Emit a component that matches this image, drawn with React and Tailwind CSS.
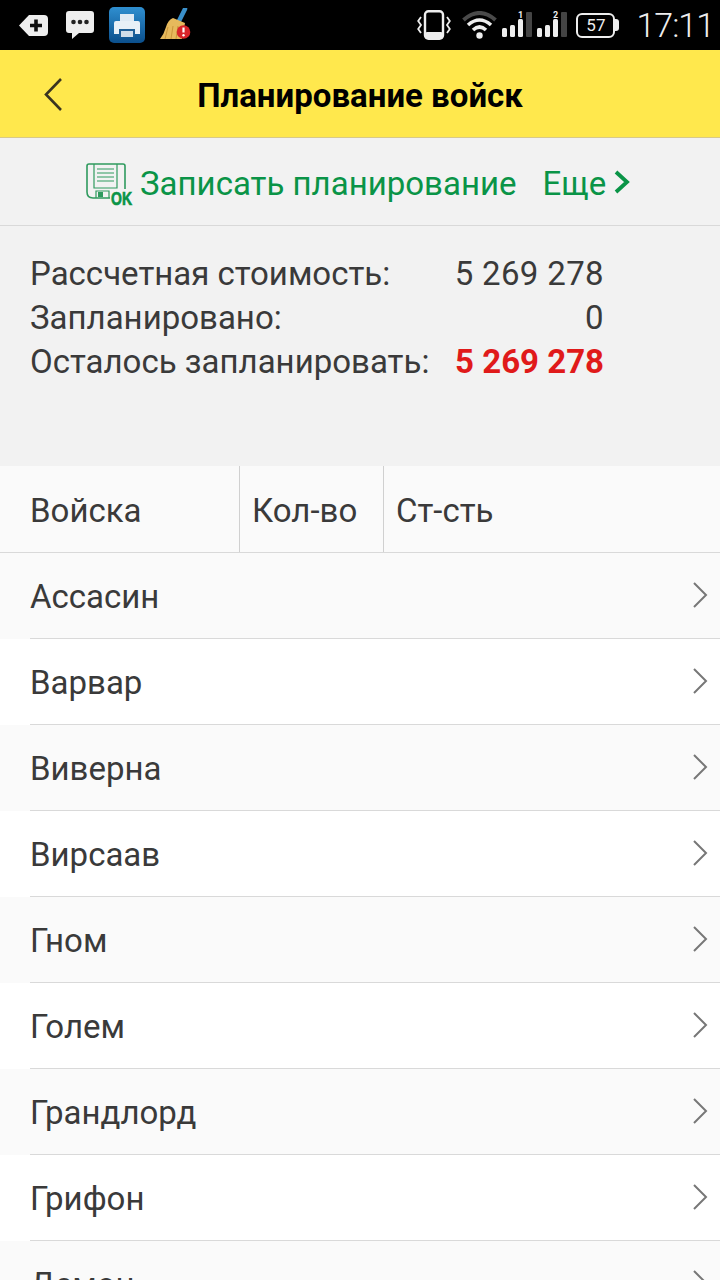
import React from 'react';

const troops = ['Ассасин', 'Варвар', 'Виверна', 'Вирсаав', 'Гном', 'Голем', 'Грандлорд', 'Грифон', 'Демон'];

function StatusIcons() {
    return (
        <div className="flex items-center">
            <svg width="30" height="24" viewBox="0 0 30 24" className="ml-[19px]">
                <path d="M10 2 L25 2 Q29 2 29 6 L29 19 Q29 23 25 23 L10 23 L0 12.5 Z" fill="#eeeeee" />
                <path d="M11 12.5h12M17 6.5v12" stroke="#111" strokeWidth="3.6" />
            </svg>
            <svg width="30" height="30" viewBox="0 0 30 30" className="ml-[16px]">
                <path d="M1 4 Q1 1 4 1 L26 1 Q29 1 29 4 L29 20 Q29 23 26 23 L14 23 L7 29 L7 23 L4 23 Q1 23 1 20 Z" fill="#eeeeee" />
                <circle cx="8.5" cy="12" r="2.3" fill="#222" />
                <circle cx="15" cy="12" r="2.3" fill="#222" />
                <circle cx="21.5" cy="12" r="2.3" fill="#222" />
            </svg>
            <svg width="36" height="36" viewBox="0 0 36 36" className="ml-[14px]">
                <defs>
                    <linearGradient id="printerBg" x1="0" y1="0" x2="0" y2="1">
                        <stop offset="0" stopColor="#2f8fd0" />
                        <stop offset="1" stopColor="#0b4f8c" />
                    </linearGradient>
                </defs>
                <rect x="0" y="0" width="36" height="36" rx="5" fill="url(#printerBg)" />
                <path d="M11 7h14v7H11z" fill="#dfeaf4" />
                <path d="M7 14h22q2 0 2 2v11h-5v-5H10v5H5V16q0-2 2-2z" fill="#e8f0f7" />
                <path d="M10 22h16v8H10z" fill="#1f5f96" />
                <path d="M12 24h12v6H12z" fill="#cfdde9" />
            </svg>
            <svg width="34" height="34" viewBox="0 0 34 34" className="ml-[15px]">
                <path d="M25 1 L19 13" stroke="#3a8fc9" strokeWidth="4.5" strokeLinecap="round" />
                <path d="M13 10 L25 15 L22 31 L0 31 Q4 26 6 19 Q8 12 13 10 Z" fill="#e6b95c" />
                <path d="M8 19 L5 31M13 18 L11 31M18 18 L16 31" stroke="#c9953a" strokeWidth="1" />
                <circle cx="23.5" cy="24" r="6.8" fill="#d8252a" />
                <path d="M23.5 19.5v5" stroke="#fff" strokeWidth="2.2" />
                <circle cx="23.5" cy="27.3" r="1.2" fill="#fff" />
            </svg>
        </div>
    );
}

function SignalBars({ label }) {
    return (
        <svg width="30" height="28" viewBox="0 0 30 28">
            <rect x="0" y="17" width="5" height="9" rx="1.5" fill="#eeeeee" />
            <rect x="8" y="14" width="5" height="12" rx="1.5" fill="#eeeeee" />
            <rect x="16" y="8" width="5" height="18" rx="1.5" fill="#eeeeee" />
            <rect x="24" y="1" width="6" height="25" rx="1" fill="#444444" />
            <text x="16" y="7" fontSize="9" fontWeight="700" fill="#eeeeee" fontFamily="Roboto, sans-serif">{label}</text>
        </svg>
    );
}

function StatusRight() {
    return (
        <div className="flex items-center">
            <svg width="34" height="30" viewBox="0 0 34 30">
                <rect x="8" y="1.2" width="18" height="27.6" rx="3.5" fill="none" stroke="#eeeeee" strokeWidth="2.4" />
                <rect x="8" y="22" width="18" height="7" rx="2" fill="#eeeeee" />
                <path d="M4 7 L1.2 11 L4 15 L1.2 19 L4 23M30 7 L32.8 11 L30 15 L32.8 19 L30 23" fill="none" stroke="#eeeeee" strokeWidth="1.8" />
            </svg>
            <svg width="35" height="28" viewBox="0 0 35 28" className="ml-[11px]">
                <path d="M1.5 9 Q17.5 -5 33.5 9" fill="none" stroke="#4a4a4a" strokeWidth="4" />
                <path d="M6 14 Q17.5 4 29 14" fill="none" stroke="#eeeeee" strokeWidth="3.6" />
                <path d="M11 19 Q17.5 13 24 19" fill="none" stroke="#eeeeee" strokeWidth="3.6" />
                <circle cx="17.5" cy="24.5" r="3.2" fill="#eeeeee" />
            </svg>
            <div className="ml-[5px]"><SignalBars label="1" /></div>
            <div className="ml-[5px]"><SignalBars label="2" /></div>
            <div className="ml-[9px] flex items-center">
                <div className="w-[39px] h-[25px] rounded-[6px] border-[2.5px] border-[#eeeeee] flex items-center justify-center text-[#eeeeee] text-[17px] leading-none">57</div>
                <div className="w-[4px] h-[12px] rounded-r-[3px] bg-[#eeeeee]"></div>
            </div>
            <span className="ml-[17px] mr-[6px] text-[#eeeeee] text-[34px] leading-none font-light tracking-[-1px]">17:11</span>
        </div>
    );
}

function SaveIcon() {
    return (
        <svg width="48" height="44" viewBox="0 0 48 44" className="shrink-0 mt-[2px]">
            {/* disk outline, bottom right is cut away for the OK mark */}
            <path d="M24 35 L7 35 Q1 35 1 29 L1 3 Q1 1 3 1 L37 1 Q39 1 39 3 L39 26" fill="none" stroke="#2f9a5e" strokeWidth="1.6" />
            <path d="M8 1 V25 H31 V1 M11 6 H28 M11 10 H28 M11 14 H28 M11 18 H28" fill="none" stroke="#2f9a5e" strokeWidth="1.2" />
            <path d="M10 35 V28 H23 V35" fill="none" stroke="#2f9a5e" strokeWidth="1.2" />
            <rect x="12" y="29" width="5" height="5" fill="#2f9a5e" />
            <text x="25" y="42" fontSize="19" fontWeight="700" fill="#0a9447" stroke="#0a9447" strokeWidth="0.7" fontFamily="'Liberation Sans', sans-serif" textLength="21" lengthAdjust="spacingAndGlyphs">OK</text>
        </svg>
    );
}

function SummaryRow({ label, value, red }) {
    return (
        <div className="flex h-[44px] items-center">
            <span className="w-[420px] shrink-0 whitespace-nowrap">{label}</span>
            <span className={`w-[154px] text-right whitespace-nowrap ${red ? 'font-bold text-[#e01a1a]' : 'tracking-[0.35px]'}`}>{value}</span>
        </div>
    );
}

export default function App() {
    return (
        <div className="w-[720px] h-[1280px] overflow-hidden bg-white text-[#3a3a3a] text-[33px] font-['Roboto',sans-serif]">
            <div className="h-[50px] bg-black flex items-center justify-between">
                <StatusIcons />
                <StatusRight />
            </div>

            <div className="relative h-[88px] pt-[4px] bg-[#ffe84d] border-b border-[#d8c98a] flex items-center justify-center">
                <svg width="24" height="36" viewBox="0 0 24 36" className="absolute left-[41px] top-[27px]">
                    <path d="M20 2 L5 17.5 L20 33" fill="none" stroke="#3a3420" strokeWidth="2.6" />
                </svg>
                <span className="text-black text-[33px] font-bold">Планирование войск</span>
            </div>

            <div className="h-[88px] pt-[4px] bg-[#f2f2f2] border-b border-[#d9d9d9] flex items-center pl-[86px] text-[#0a9447]">
                <SaveIcon />
                <span className="ml-[6px]">Записать планирование</span>
                <span className="ml-[26px]">Еще</span>
                <svg width="18" height="26" viewBox="0 0 18 26" className="ml-[7px] mb-[4px]">
                    <path d="M3 3 L14 13 L3 23" fill="none" stroke="#0a9447" strokeWidth="3.8" />
                </svg>
            </div>

            <div className="h-[240px] bg-[#f2f2f2] pl-[30px] pt-[26px]">
                <SummaryRow label="Рассчетная стоимость:" value="5 269 278" />
                <SummaryRow label="Запланировано:" value="0" />
                <SummaryRow label="Осталось запланировать:" value="5 269 278" red />
            </div>

            <div className="flex h-[87px] bg-[#fafafa] border-b border-[#d9d9d9]">
                <div className="w-[240px] border-r border-[#d0d0d0] pl-[30px] pt-[3px] flex items-center">Войска</div>
                <div className="w-[144px] border-r border-[#d0d0d0] pl-[12px] pt-[3px] flex items-center">Кол-во</div>
                <div className="pl-[12px] pt-[3px] flex items-center">Ст-сть</div>
            </div>

            {troops.map((name, i) => (
                <div key={name} className={`h-[86px] ${i % 2 === 0 ? 'bg-[#fafafa]' : 'bg-white'}`}>
                    <div className="ml-[30px] h-full border-b border-[#d9d9d9] flex items-center justify-between pr-[11px]">
                        <span className="pt-[2px]">{name}</span>
                        <svg width="18" height="28" viewBox="0 0 18 28" className="mb-[2px]">
                            <path d="M3 2 L15 14 L3 26" fill="none" stroke="#777777" strokeWidth="2" />
                        </svg>
                    </div>
                </div>
            ))}
        </div>
    );
}
